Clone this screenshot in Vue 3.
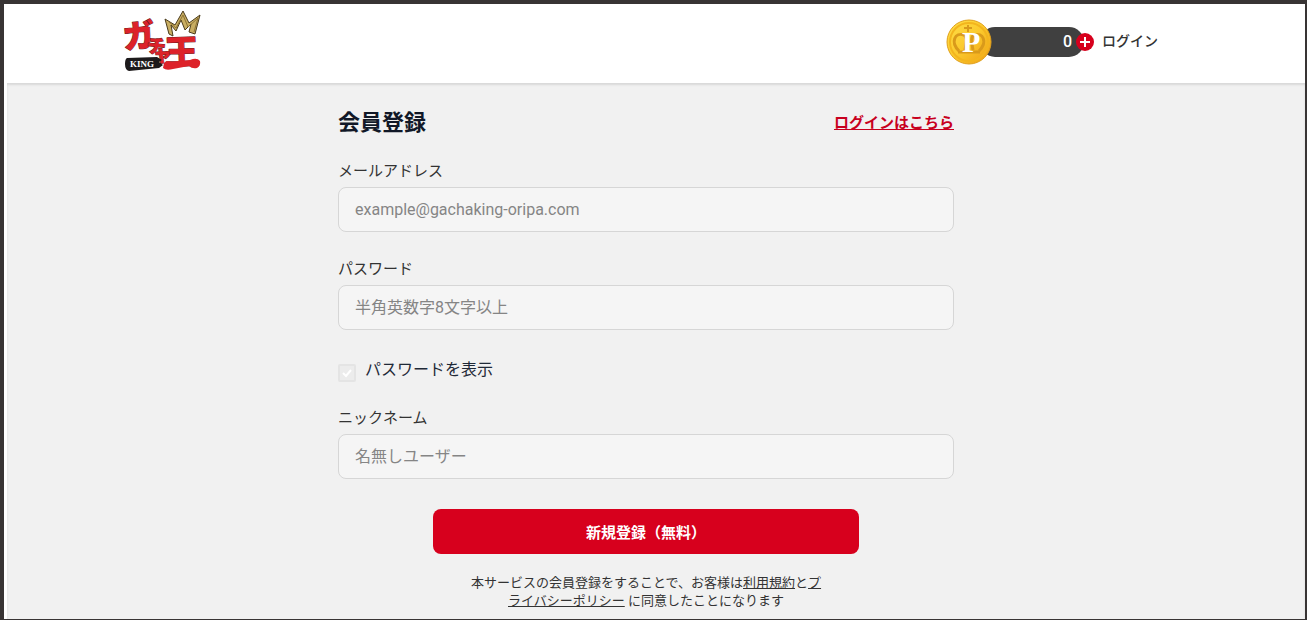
<script setup>
import { ref } from "vue";

const email = ref("");
const password = ref("");
const nickname = ref("");
const showPassword = ref(true);
const point = ref(0);
</script>

<template>
  <div class="window">
    <header class="header">
      <div class="header-inner">
        <a class="logo" href="#" aria-label="ガチャ王">
          <svg width="78" height="64" viewBox="0 0 78 64">
            <!-- 王冠 -->
            <path
              class="crown"
              d="M41 9 L51 15 L59 1 L65 13 L76 5 L71 24 L65 22 L67 14 L61 20 L57 10 L52 21 L47 15 L49 26 L45 24 Z"
            />
            <path class="crown-line" d="M44 11 L52 18 L59 5 L64 17 L74 8 L70 22" />
            <g class="logo-char">
              <text x="0" y="39" font-size="32" rotate="-6">ガ</text>
              <text x="22" y="42" font-size="19" rotate="6">チ</text>
              <text x="28" y="50" font-size="20" rotate="8">ャ</text>
              <text x="41" y="55" font-size="34" rotate="-2">王</text>
            </g>
            <!-- 王の下の筆あと -->
            <path
              class="brush"
              d="M40 53 Q42 50 48 52 L66 50 Q73 47 76 51 Q77 56 73 58 Q68 59 65 56 L49 59 Q42 61 39 58 Z"
            />
            <!-- KINGの帯 -->
            <path
              class="banner"
              d="M3 48 L33 47 L38 50 L35 52 L39 55 L35 58 L5 61 Q1 60 1 54 Q1 49 3 48 Z"
            />
            <text class="banner-text" x="6" y="57">KING</text>
          </svg>
        </a>
        <nav class="menu">
          <div class="point">
            <svg class="coin" width="46" height="46" viewBox="0 0 46 46">
              <defs>
                <linearGradient id="gold" x1="0" y1="0" x2="1" y2="1">
                  <stop offset="0" stop-color="#ffe04a" />
                  <stop offset="0.5" stop-color="#fbc92c" />
                  <stop offset="1" stop-color="#ee9c14" />
                </linearGradient>
              </defs>
              <circle cx="23" cy="23" r="22" fill="url(#gold)" stroke="#e0a01c" />
              <circle cx="23" cy="23" r="19" fill="none" stroke="#f3b51e" stroke-width="2" />
              <g fill="none" stroke="#d99a1b" stroke-width="3">
                <path d="M22 6 V13 M18 9 H26" stroke-width="2" />
                <path d="M13 32 C4 23 9 13 18 16 C22 18 20 25 19 31" />
                <path d="M33 32 C42 23 37 13 28 16 C24 18 26 25 27 31" />
                <path d="M12 33 H34" />
              </g>
              <text class="coin-text" x="16" y="33">P</text>
            </svg>
            <span class="point-bar">{{ point }}</span>
            <button class="plus" type="button" aria-label="ポイント購入">
              <svg width="18" height="18" viewBox="0 0 18 18">
                <circle cx="9" cy="9" r="9" fill="#d7001d" />
                <path d="M9 4 V14 M4 9 H14" stroke="#fff" stroke-width="2" />
              </svg>
            </button>
          </div>
          <a class="login" href="#">ログイン</a>
        </nav>
      </div>
    </header>

    <main class="main">
      <form class="form" @submit.prevent>
        <div class="title-row">
          <h1 class="title">会員登録</h1>
          <a class="login-link" href="#">ログインはこちら</a>
        </div>

        <div class="field">
          <label for="email">メールアドレス</label>
          <input id="email" v-model="email" type="email" placeholder="example@gachaking-oripa.com" />
        </div>

        <div class="field">
          <label for="password">パスワード</label>
          <input
            id="password"
            v-model="password"
            :type="showPassword ? 'text' : 'password'"
            placeholder="半角英数字8文字以上"
          />
        </div>

        <div class="check">
          <input id="show-password" v-model="showPassword" type="checkbox" />
          <label for="show-password">パスワードを表示</label>
        </div>

        <div class="field">
          <label for="nickname">ニックネーム</label>
          <input id="nickname" v-model="nickname" type="text" placeholder="名無しユーザー" />
        </div>

        <button class="submit" type="submit">新規登録（無料）</button>

        <p class="terms">
          本サービスの会員登録をすることで、お客様は<a href="#">利用規約</a>と<a href="#">プライバシーポリシー</a>
          に同意したことになります
        </p>
      </form>
    </main>
  </div>
</template>

<style>
body {
  background-color: #f1f1f1;
}
</style>

<style scoped>
* {
  box-sizing: border-box;
}
.window {
  display: flex;
  flex-direction: column;
  min-height: 100vh;
  border: solid #383434;
  border-width: 4px 2px 1px 4px;
  background-color: #fff;
  color: #333;
  font-family: Roboto, "Noto Sans CJK JP", sans-serif;
}
.header {
  padding-right: 17px;
  background-color: #fff;
}
.header-inner {
  display: flex;
  justify-content: space-between;
  align-items: center;
  max-width: 1044px;
  height: 79px;
  margin: 0 auto;
  padding: 0 10px 4px 0;
}
.logo {
  display: block;
  height: 64px;
}
.logo svg {
  overflow: visible;
}
.crown {
  fill: #c9ae62;
  stroke: #4a3b1c;
  stroke-width: 1;
}
.crown-line {
  fill: none;
  stroke: #8d7334;
  stroke-width: 1;
}
.logo-char {
  fill: #dd2229;
  stroke: #6b1a1c;
  stroke-width: 1;
  stroke-linejoin: round;
  paint-order: stroke;
  font-family: "Noto Sans CJK JP", sans-serif;
  font-weight: 900;
}
.brush {
  fill: #dd2229;
}
.banner {
  fill: #1d1a1b;
}
.banner-text {
  fill: #fff;
  font-family: "Liberation Serif", serif;
  font-size: 9px;
  font-weight: 700;
}
.menu {
  display: flex;
  align-items: center;
  gap: 8px;
}
.point {
  display: flex;
  align-items: center;
}
.coin {
  position: relative;
}
.coin-text {
  fill: #fff;
  font-family: "Liberation Serif", serif;
  font-size: 30px;
  font-weight: 700;
}
.point-bar {
  width: 104px;
  height: 30px;
  margin-left: -12px;
  padding-right: 12px;
  border-radius: 15px;
  background-color: #404040;
  color: #fff;
  font-size: 16px;
  font-weight: 500;
  line-height: 30px;
  text-align: right;
}
.plus {
  display: flex;
  position: relative;
  margin-left: -8px;
  padding: 0;
  border: none;
  background: none;
  cursor: pointer;
}
.login {
  color: #333;
  font-size: 14px;
  font-weight: 500;
  line-height: 20px;
  padding-bottom: 2px;
  text-decoration: none;
}
.main {
  flex: 1;
  margin-left: 3px;
  padding: 24px 20px 8px 0;
  background-color: #f1f1f1;
  box-shadow: inset 0 2px 2px #d8d8d8;
}
.form {
  max-width: 616px;
  margin: 0 auto;
}
.title-row {
  display: flex;
  justify-content: space-between;
  align-items: flex-start;
  margin-bottom: 21px;
}
.title {
  margin: 0;
  color: #111827;
  font-size: 22px;
  font-weight: 700;
  line-height: 32px;
}
.login-link {
  color: #c8001e;
  font-size: 15px;
  font-weight: 700;
  line-height: 32px;
}
.field {
  display: flex;
  flex-direction: column;
  gap: 5px;
  margin-bottom: 26px;
}
.field label {
  font-size: 15px;
  line-height: 22px;
}
.field input {
  height: 45px;
  padding: 0 16px;
  border: 1px solid #d6d6d6;
  border-radius: 8px;
  background-color: #f5f5f5;
  color: #333;
  font-family: inherit;
  font-size: 16px;
}
.field input::placeholder {
  color: #858585;
}
.check {
  display: flex;
  align-items: flex-end;
  gap: 9px;
  margin: 28px 0 25px;
  color: #1f2937;
  font-size: 16px;
  line-height: 24px;
}
.check input {
  width: 18px;
  height: 18px;
  margin: 0;
  border: 2px solid #e4e4e4;
  border-radius: 2px;
  appearance: none;
}
.check input:checked {
  background: url("data:image/svg+xml,%3Csvg xmlns='http://www.w3.org/2000/svg' viewBox='0 0 14 14'%3E%3Cpath d='M3 7l3 3 5-6' fill='none' stroke='%23fff' stroke-width='2'/%3E%3C/svg%3E")
    #ececec;
}
.submit {
  display: block;
  width: 426px;
  max-width: 100%;
  height: 45px;
  margin: 30px auto 20px;
  border: none;
  border-radius: 8px;
  background-color: #d7001d;
  color: #fff;
  font-family: inherit;
  font-size: 15px;
  font-weight: 700;
  cursor: pointer;
}
.terms {
  max-width: 360px;
  margin: 0 auto;
  font-size: 13px;
  line-height: 18px;
  text-align: center;
}
.terms a {
  color: inherit;
}
</style>
